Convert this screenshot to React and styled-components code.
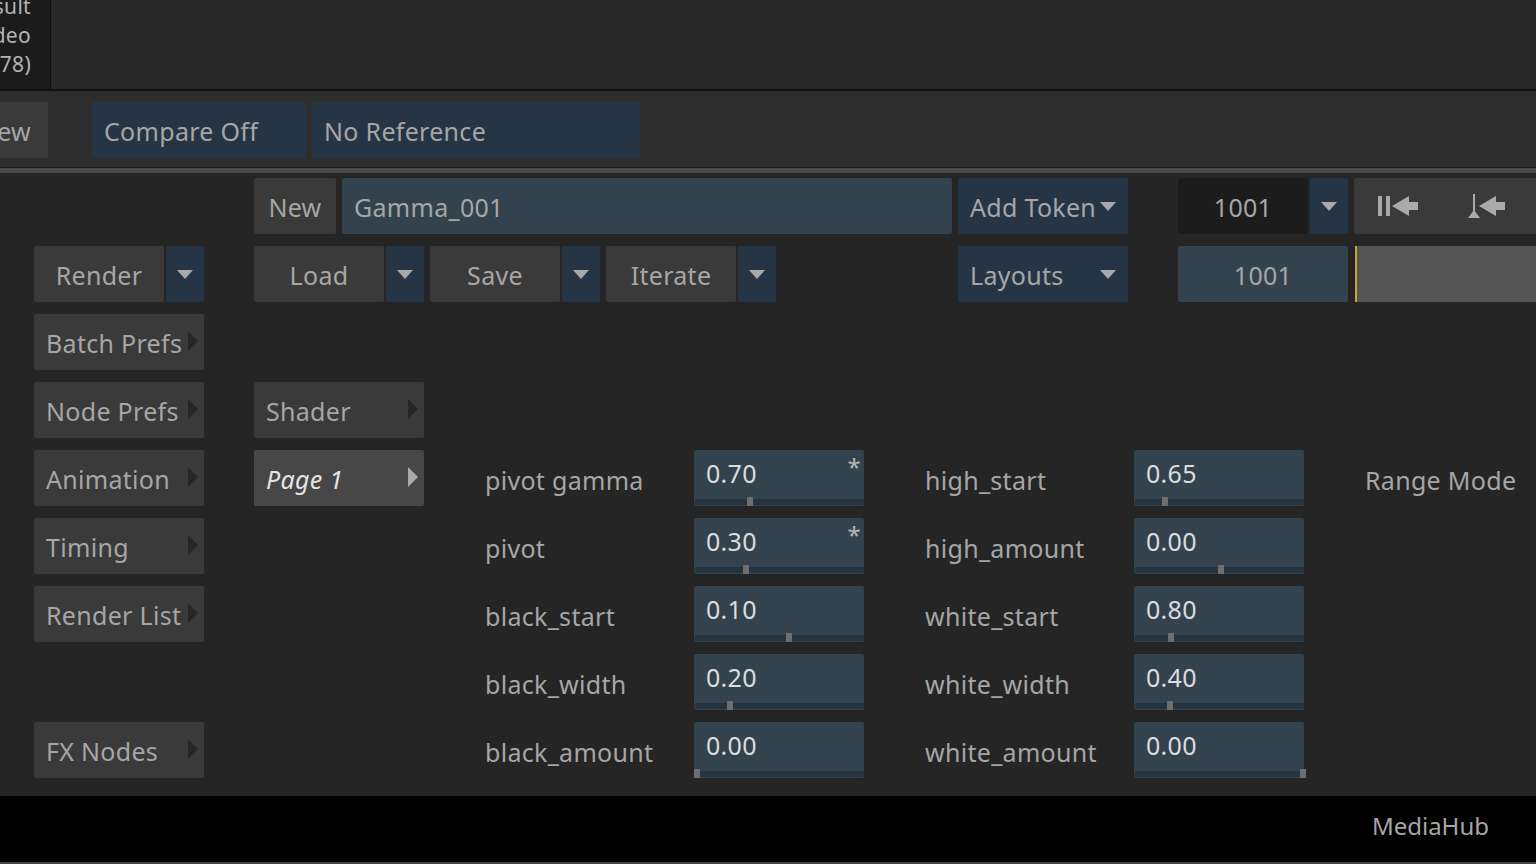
import styled, { createGlobalStyle } from 'styled-components';

const GlobalStyle = createGlobalStyle`
  html, body {
    margin: 0;
    height: 100%;
    overflow: hidden;
    background: #252525;
  }
  * {
    box-sizing: border-box;
  }
`;

const Page = styled.div`
  width: 1536px;
  height: 864px;
  display: flex;
  flex-direction: column;
  overflow: hidden;
  font-family: "Noto Sans", "Liberation Sans", sans-serif;
  font-stretch: 87.5%;
  font-size: 25px;
  letter-spacing: 0.3px;
  color: #a6a6a6;
`;

const TopPanel = styled.div`
  height: 91px;
  flex: none;
  background: #282828;
  border-bottom: 2px solid #111;
`;

const ThumbInfo = styled.div`
  width: 51px;
  height: 100%;
  padding: 0 19px 10px 0;
  display: flex;
  flex-direction: column;
  justify-content: flex-end;
  align-items: flex-end;
  background: #1b1b1b;
  border-right: 1px solid #0e0e0e;
  overflow: hidden;
  font-size: 21px;
  line-height: 29px;
  color: #b4b4b4;
`;

const ViewBar = styled.div`
  height: 76px;
  flex: none;
  padding-top: 11px;
  display: flex;
  align-items: flex-start;
  gap: 6px;
  background: #2d2d2d;
`;

const Btn = styled.div`
  height: 56px;
  display: flex;
  align-items: center;
  justify-content: ${({ $align }) => $align || 'space-between'};
  padding: 1px ${({ $pad }) => $pad ?? 12}px 0 12px;
  width: ${({ $w }) => ($w ? `${$w}px` : 'auto')};
  flex: none;
  background: #3a3a3a;
  border-radius: 2px;
  white-space: nowrap;
`;

const NavyBtn = styled(Btn)`
  background: #263545;
`;

const EdgeBtn = styled(Btn)`
  justify-content: flex-end;
  padding: 1px 17px 0 0;
  margin-right: 38px;
`;

const Divider = styled.div`
  height: 6px;
  flex: none;
  background: #4a4a4a;
  border-top: 1px solid #1f1f1f;
`;

const Main = styled.div`
  flex: 1;
  min-height: 0;
  padding: 5px 0 0 34px;
  display: grid;
  grid-template-columns: 170px 1fr;
  column-gap: 50px;
  background: #252525;
`;

const SideColumn = styled.div`
  margin-top: 68px;
  display: flex;
  flex-direction: column;
  gap: 12px;
`;

const Content = styled.div`
  display: flex;
  flex-direction: column;
  gap: 12px;
`;

const Spacer = styled.div`
  height: 56px;
  flex: none;
`;

const TopGrid = styled.div`
  display: grid;
  grid-template-columns: 698px 170px 38px 170px 1fr;
  grid-auto-rows: 56px;
  gap: 12px 6px;
`;

const Cell = styled.div`
  grid-column: ${({ $col }) => $col};
  display: flex;
  gap: ${({ $gap }) => $gap ?? 6}px;
  min-width: 0;
`;

const Split = styled.div`
  display: flex;
  gap: 2px;
`;

const DarkField = styled(Btn)`
  background: #1c1c1c;
`;

const NameField = styled(Btn)`
  flex: 1;
  justify-content: flex-start;
  background: #33434e;
`;

const FrameField = styled(Btn)`
  flex: 1;
  justify-content: center;
  background: #33434e;
`;

const Down = styled.span`
  flex: none;
  width: 0;
  height: 0;
  border-left: 8px solid transparent;
  border-right: 8px solid transparent;
  border-top: 9px solid #a9a9a9;
`;

const Right = styled.span`
  flex: none;
  width: 0;
  height: 0;
  margin-top: -4px;
  border-top: 10px solid transparent;
  border-bottom: 10px solid transparent;
  border-left: 10px solid ${({ $lit }) => ($lit ? '#a9a9a9' : '#262626')};
`;

const Transport = styled.div`
  flex: 1;
  height: 56px;
  padding-left: 24px;
  display: flex;
  align-items: center;
  gap: 50px;
  background: #3a3a3a;
  border-radius: 2px 0 0 2px;
`;

const Timeline = styled.div`
  flex: 1;
  height: 56px;
  margin-left: 1px;
  background: #545454;
  border-left: 2px solid #c9a92c;
`;

const MenuBtn = styled(Btn)`
  padding-right: 6px;
`;

const PageBtn = styled(MenuBtn)`
  background: #474747;
  color: #e4e4e4;
  font-style: italic;
`;

const ParamSection = styled.div`
  display: flex;
  align-items: flex-start;
`;

const Params = styled.div`
  display: flex;
  gap: 61px;
  padding-left: 61px;
`;

const ParamColumn = styled.div`
  display: flex;
  flex-direction: column;
  gap: 12px;
`;

const ParamRow = styled.div`
  height: 56px;
  display: grid;
  grid-template-columns: 209px 170px;
`;

const Label = styled.div`
  height: 56px;
  padding-top: 3px;
  display: flex;
  align-items: center;
  white-space: nowrap;
`;

const Field = styled.div`
  position: relative;
  height: 56px;
  padding: 6px 12px 0;
  background: #33434e;
  border-radius: 2px;
  color: #dcdcdc;
  line-height: 34px;
`;

const Trough = styled.div`
  position: absolute;
  left: 1px;
  right: 0;
  bottom: 1px;
  height: 6px;
  background: #26343f;
`;

const Handle = styled.div`
  position: absolute;
  bottom: 0;
  width: 6px;
  height: 9px;
  background: #6e6e6e;
`;

const Star = styled.span`
  position: absolute;
  top: 3px;
  right: 3px;
  font-size: 24px;
  line-height: 28px;
  color: #b4b4b4;
`;

const Footer = styled.div`
  height: 68px;
  flex: none;
  padding: 0 47px 8px 0;
  display: flex;
  align-items: center;
  justify-content: flex-end;
  background: #000;
  border-bottom: 2px solid #444;
  font-size: 24px;
  letter-spacing: 0;
`;

const sideItems = ['Batch Prefs', 'Node Prefs', 'Animation', 'Timing', 'Render List'];

const leftParams = [
  { name: 'pivot gamma', value: '0.70', at: 53, changed: true },
  { name: 'pivot', value: '0.30', at: 49, changed: true },
  { name: 'black_start', value: '0.10', at: 92 },
  { name: 'black_width', value: '0.20', at: 33 },
  { name: 'black_amount', value: '0.00', at: 0 },
];

const rightParams = [
  { name: 'high_start', value: '0.65', at: 28 },
  { name: 'high_amount', value: '0.00', at: 84 },
  { name: 'white_start', value: '0.80', at: 34 },
  { name: 'white_width', value: '0.40', at: 33 },
  { name: 'white_amount', value: '0.00', at: 166 },
];

function SplitBtn({ label }) {
  return (
    <Split>
      <Btn $w={130} $align='center'>{label}</Btn>
      <NavyBtn $w={38} $align='center'><Down /></NavyBtn>
    </Split>
  );
}

function Param({ name, value, at, changed }) {
  return (
    <ParamRow>
      <Label>{name}</Label>
      <Field>
        {value}
        {changed && <Star>*</Star>}
        <Trough />
        <Handle style={{ left: at }} />
      </Field>
    </ParamRow>
  );
}

function GoToStart() {
  return (
    <svg width='40' height='20' viewBox='0 0 40 20' fill='#aaa'>
      <rect x='0' y='0' width='4' height='20' />
      <rect x='8' y='0' width='4' height='20' />
      <path d='M14 10 L31 0 V6 H40 V14 H31 V20 Z' />
    </svg>
  );
}

function GoToIn() {
  return (
    <svg width='37' height='24' viewBox='0 0 37 24' fill='#aaa'>
      <rect x='5' y='0' width='2' height='18' />
      <path d='M0 24 L6 16 L12 24 Z' />
      <path d='M11 12 L28 2 V8 H37 V16 H28 V22 Z' />
    </svg>
  );
}

export default function App() {
  return (
    <Page>
      <GlobalStyle />
      <TopPanel>
        <ThumbInfo>
          <div>sult</div>
          <div>deo</div>
          <div>78)</div>
        </ThumbInfo>
      </TopPanel>
      <ViewBar>
        <EdgeBtn $w={48}>ew</EdgeBtn>
        <NavyBtn $w={214}>Compare Off</NavyBtn>
        <NavyBtn $w={328}>No Reference</NavyBtn>
      </ViewBar>
      <Divider />
      <Main>
        <SideColumn>
          <Split>
            <Btn $w={130} $align='center'>Render</Btn>
            <NavyBtn $w={38} $align='center'><Down /></NavyBtn>
          </Split>
          {sideItems.map((item) => (
            <MenuBtn key={item}>{item}<Right /></MenuBtn>
          ))}
          <Spacer />
          <MenuBtn>FX Nodes<Right /></MenuBtn>
        </SideColumn>
        <Content>
          <TopGrid>
            <Cell $col={1}>
              <Btn $w={82} $align='center'>New</Btn>
              <NameField>Gamma_001</NameField>
            </Cell>
            <Cell $col={2}>
              <NavyBtn $w={170}>Add Token<Down /></NavyBtn>
            </Cell>
            <Cell $col={4} $gap={2}>
              <DarkField $w={130} $align='center'>1001</DarkField>
              <NavyBtn $w={38} $align='center'><Down /></NavyBtn>
            </Cell>
            <Cell $col={5}>
              <Transport>
                <GoToStart />
                <GoToIn />
              </Transport>
            </Cell>
            <Cell $col={1}>
              <SplitBtn label='Load' />
              <SplitBtn label='Save' />
              <SplitBtn label='Iterate' />
            </Cell>
            <Cell $col={2}>
              <NavyBtn $w={170}>Layouts<Down /></NavyBtn>
            </Cell>
            <Cell $col={4}>
              <FrameField>1001</FrameField>
            </Cell>
            <Cell $col={5}>
              <Timeline />
            </Cell>
          </TopGrid>
          <Spacer />
          <MenuBtn $w={170}>Shader<Right /></MenuBtn>
          <ParamSection>
            <PageBtn $w={170}>Page 1<Right $lit /></PageBtn>
            <Params>
              <ParamColumn>
                {leftParams.map((p) => <Param key={p.name} {...p} />)}
              </ParamColumn>
              <ParamColumn>
                {rightParams.map((p) => <Param key={p.name} {...p} />)}
              </ParamColumn>
              <Label>Range Mode</Label>
            </Params>
          </ParamSection>
        </Content>
      </Main>
      <Footer>MediaHub</Footer>
    </Page>
  );
}
